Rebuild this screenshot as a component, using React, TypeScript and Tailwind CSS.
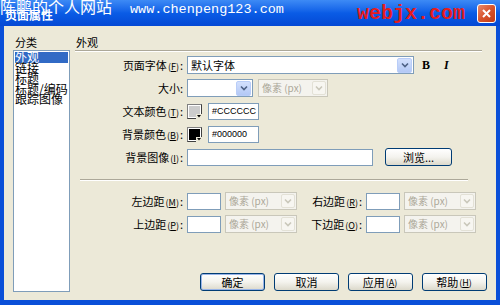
import React from 'react'

const ui = "font-['Noto_Sans_CJK_SC','Liberation_Sans',sans-serif]"

function Acc({ k }: { k: string }) {
  return (
    <span className="text-[9px] mx-[1px]">
      (<span className="underline">{k}</span>)
    </span>
  )
}

function Label({ text, k, w = 'w-[108px]' }: { text: string; k?: string; w?: string }) {
  return (
    <div className={`${w} shrink-0 text-right text-[11px] leading-none text-black whitespace-nowrap`}>
      {text}
      {k && <Acc k={k} />}:
    </div>
  )
}

function Chevron({ color }: { color: string }) {
  return (
    <svg width="8" height="6" viewBox="0 0 8 6">
      <path d="M1 1.5 L4 4.5 L7 1.5" fill="none" stroke={color} strokeWidth="1.6" />
    </svg>
  )
}

function ComboArrow() {
  return (
    <div className="w-[15px] h-[15px] m-[1px] shrink-0 rounded-[2px] bg-gradient-to-b from-[#d3e0fd] to-[#b3c8f5] border border-[#b9cdf8] flex items-center justify-center">
      <Chevron color="#4d6185" />
    </div>
  )
}

function Combo({ w, text }: { w: string; text?: string }) {
  return (
    <div className={`${w} h-[18px] shrink-0 border border-[#7f9db9] bg-white flex items-center`}>
      <div className="flex-1 pl-[3px] text-[11px] leading-none text-black">{text}</div>
      <ComboArrow />
    </div>
  )
}

function DisabledSelect({ w }: { w: string }) {
  return (
    <div className={`${w} h-[18px] shrink-0 border border-[#c9c7ba] bg-[#f4f3ee] flex items-center`}>
      <div className="flex-1 pl-[3px] text-[10px] leading-none text-[#aca899]">像素 (px)</div>
      <div className="w-[14px] h-[14px] m-[1px] rounded-[2px] border border-[#e3e1d6] bg-[#f7f6f1] flex items-center justify-center">
        <Chevron color="#c9c7ba" />
      </div>
    </div>
  )
}

function TextBox({ w, text }: { w: string; text?: string }) {
  return (
    <div className={`${w} h-[17px] shrink-0 overflow-hidden border border-[#7f9db9] bg-white flex items-center pl-[3px] text-[9px] leading-none text-black font-['Liberation_Sans',sans-serif]`}>
      {text}
    </div>
  )
}

function Swatch({ fill }: { fill: string }) {
  return (
    <div className="relative w-[15px] h-[15px] shrink-0 border border-[#808080] border-r-[#404040] border-b-[#404040] bg-white p-[1px]">
      <div className={`w-full h-full ${fill}`} />
      <svg className="absolute right-[-1px] bottom-[-1px]" width="6" height="5" viewBox="0 0 6 5">
        <rect width="6" height="5" fill="#ece9d8" />
        <path d="M1 1 L5 1 L3 3.5 Z" fill="#000" />
      </svg>
    </div>
  )
}

function XpButton({ label, w = 'w-[65px]', def = false }: { label: React.ReactNode; w?: string; def?: boolean }) {
  return (
    <div
      className={`${w} h-[18px] shrink-0 rounded-[3px] border border-[#003c74] bg-gradient-to-b from-white via-[#f4f3ee] to-[#dcd9cb] flex items-center justify-center text-[11px] leading-none text-black ${
        def ? 'shadow-[inset_0_0_0_1px_#98b4e8]' : ''
      }`}
    >
      {label}
    </div>
  )
}

function Etched({ className = '' }: { className?: string }) {
  return <div className={`h-[2px] border-t border-[#aca899] border-b border-b-white ${className}`} />
}

export default function App() {
  return (
    <div className={`w-[500px] h-[305px] flex flex-col bg-[#0a4fd8] overflow-hidden ${ui}`}>
      {/* title bar */}
      <div className="relative h-[26px] shrink-0 flex items-center pl-[5px] pr-[4px] bg-gradient-to-b from-[#3d8af5] via-[#0a5ce6] to-[#0548d4]">
        <span className="text-[12px] font-bold text-white leading-none mt-[3px]">页面属性</span>
        <span className="ml-auto mr-[12px] mt-[1px] text-[20px] font-bold leading-none text-[#e51c1c] font-['Liberation_Mono',monospace]">
          webjx.com
        </span>
        <div className="w-[19px] h-[19px] rounded-[3px] border border-white bg-gradient-to-br from-[#e8896a] via-[#d8532b] to-[#c23b14] flex items-center justify-center">
          <svg width="11" height="11" viewBox="0 0 11 11">
            <path d="M2 2 L9 9 M9 2 L2 9" stroke="#fff" strokeWidth="2" />
          </svg>
        </div>
        {/* watermark over title */}
        <div className="absolute left-0 top-[-2px] flex items-baseline whitespace-nowrap text-white leading-none">
          <span className="text-[16px]">陈鹏的个人网站</span>
          <span className="ml-[18px] text-[13.5px] font-['Liberation_Mono',monospace]">www.chenpeng123.com</span>
        </div>
      </div>

      {/* body */}
      <div className="flex-1 flex px-[4px] pb-[5px]">
        <div className="flex-1 flex gap-[5px] bg-[#ece9d8] pl-[9px] pr-[9px] pt-[11px] pb-[8px]">
          {/* categories */}
          <div className="w-[57px] flex flex-col">
            <div className="h-[13px] pl-[2px] text-[11px] leading-none text-black">分类</div>
            <div className="flex-1 border border-[#7f9db9] bg-white pt-[1px] px-[1px] text-[12px] leading-[10.5px] text-black">
              <div className="bg-[#316ac5] text-white">外观</div>
              <div>链接</div>
              <div>标题</div>
              <div className="whitespace-nowrap">标题/编码</div>
              <div>跟踪图像</div>
            </div>
          </div>

          {/* appearance */}
          <div className="flex-1 flex flex-col">
            <div className="h-[13px] pl-[1px] text-[11px] leading-none text-black">外观</div>
            <Etched className="mr-[5px]" />
            <div className="mt-[4px] flex flex-col gap-[5px]">
              <div className="flex items-center h-[18px] gap-[4px]">
                <Label text="页面字体" k="F" />
                <Combo w="w-[227px]" text="默认字体" />
                <span className="ml-[4px] text-[12px] font-bold font-['Liberation_Serif',serif]">B</span>
                <span className="ml-[10px] text-[12px] font-bold italic font-['Liberation_Serif',serif]">I</span>
              </div>
              <div className="flex items-center h-[18px] gap-[4px]">
                <Label text="大小" />
                <Combo w="w-[66px]" />
                <div className="ml-[1px]">
                  <DisabledSelect w="w-[70px]" />
                </div>
              </div>
              <div className="flex items-center h-[18px] gap-[4px]">
                <Label text="文本颜色" k="T" />
                <Swatch fill="bg-[#cccccc]" />
                <div className="ml-[2px]">
                  <TextBox w="w-[51px]" text="#CCCCCC" />
                </div>
              </div>
              <div className="flex items-center h-[18px] gap-[4px]">
                <Label text="背景颜色" k="B" />
                <Swatch fill="bg-black" />
                <div className="ml-[2px]">
                  <TextBox w="w-[51px]" text="#000000" />
                </div>
              </div>
              <div className="flex items-center h-[18px] gap-[4px]">
                <Label text="背景图像" k="I" />
                <TextBox w="w-[186px]" />
                <div className="ml-[8px]">
                  <XpButton w="w-[67px]" label="浏览..." />
                </div>
              </div>
            </div>

            <Etched className="mt-[13px] ml-[5px] mr-[19px]" />

            <div className="mt-[11px] flex flex-col gap-[5px]">
              <div className="flex items-center h-[18px] gap-[4px]">
                <Label text="左边距" k="M" />
                <TextBox w="w-[34px]" />
                <DisabledSelect w="w-[72px]" />
                <Label text="右边距" k="R" w="w-[61px]" />
                <TextBox w="w-[34px]" />
                <DisabledSelect w="w-[72px]" />
              </div>
              <div className="flex items-center h-[18px] gap-[4px]">
                <Label text="上边距" k="P" />
                <TextBox w="w-[34px]" />
                <DisabledSelect w="w-[72px]" />
                <Label text="下边距" k="O" w="w-[61px]" />
                <TextBox w="w-[34px]" />
                <DisabledSelect w="w-[72px]" />
              </div>
            </div>

            <div className="mt-auto mb-[1px] flex justify-end gap-[9px]">
              <XpButton label="确定" def />
              <XpButton label="取消" />
              <XpButton label={<>应用<Acc k="A" /></>} />
              <XpButton label={<>帮助<Acc k="H" /></>} />
            </div>
          </div>
        </div>
      </div>
    </div>
  )
}
